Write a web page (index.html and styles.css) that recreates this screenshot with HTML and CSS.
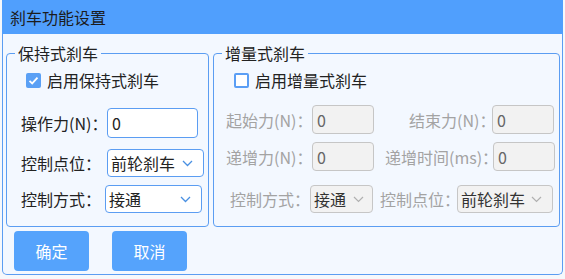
FILE: index.html
```html
<!DOCTYPE html>
<html lang="zh-CN">
<head>
  <meta charset="UTF-8">
  <title>刹车功能设置</title>
  <link rel="stylesheet" href="styles.css">
</head>
<body>
  <div class="window">
    <div class="titlebar">刹车功能设置</div>
    <div class="content">
      <div class="groups">
        <fieldset class="group group-hold">
          <legend>保持式刹车</legend>
          <div class="check-row">
            <span class="check checked">
              <svg width="15" height="15" viewBox="0 0 15 15"><path d="M3.5 7.8 L6.2 10.4 L11.5 4.6" fill="none" stroke="#fff" stroke-width="1.8"/></svg>
            </span>
            启用保持式刹车
          </div>
          <div class="row row-first">
            <label class="lbl lbl-hold">操作力(N)：</label>
            <input class="field" type="text" value="0">
          </div>
          <div class="row row-second">
            <label class="lbl lbl-hold">控制点位：</label>
            <div class="select">前轮刹车
              <svg class="arrow" width="11" height="7" viewBox="0 0 11 7"><path d="M1 1 L5.5 5.5 L10 1" fill="none" stroke="#4a90e2" stroke-width="1.3"/></svg>
            </div>
          </div>
          <div class="row row-third">
            <label class="lbl lbl-hold-mode">控制方式：</label>
            <div class="select">接通
              <svg class="arrow" width="11" height="7" viewBox="0 0 11 7"><path d="M1 1 L5.5 5.5 L10 1" fill="none" stroke="#4a90e2" stroke-width="1.3"/></svg>
            </div>
          </div>
        </fieldset>

        <fieldset class="group group-inc">
          <legend>增量式刹车</legend>
          <div class="check-row">
            <span class="check"></span>
            启用增量式刹车
          </div>
          <div class="row row-a">
            <label class="lbl off lbl-start">起始力(N)：</label>
            <input class="field small" type="text" value="0" disabled>
            <label class="lbl off lbl-end">结束力(N)：</label>
            <input class="field small" type="text" value="0" disabled>
          </div>
          <div class="row row-b">
            <label class="lbl off lbl-start">递增力(N)：</label>
            <input class="field small" type="text" value="0" disabled>
            <label class="lbl off lbl-time">递增时间(ms)：</label>
            <input class="field small" type="text" value="0" disabled>
          </div>
          <div class="row row-c">
            <label class="lbl off lbl-mode">控制方式：</label>
            <div class="select small off">接通
              <svg class="arrow" width="11" height="7" viewBox="0 0 11 7"><path d="M1 1 L5.5 5.5 L10 1" fill="none" stroke="#b0b0b0" stroke-width="1.2"/></svg>
            </div>
            <label class="lbl off lbl-point">控制点位：</label>
            <div class="select off">前轮刹车
              <svg class="arrow" width="11" height="7" viewBox="0 0 11 7"><path d="M1 1 L5.5 5.5 L10 1" fill="none" stroke="#b0b0b0" stroke-width="1.2"/></svg>
            </div>
          </div>
        </fieldset>
      </div>

      <div class="actions">
        <button class="btn">确定</button>
        <button class="btn">取消</button>
      </div>
    </div>
  </div>
</body>
</html>
```

FILE: styles.css
```css
body {
  margin: 0;
  background: #f6f8fb;
  font-family: "Noto Sans CJK SC", "Liberation Sans", sans-serif;
  font-size: 16px;
  color: #222;
}

.window {
  width: 561px;
  margin-left: 2px;
}

.titlebar {
  height: 34px;
  line-height: 34px;
  padding-left: 8px;
  background-color: #509ffd;
  color: #1c1c1c;
}

.content {
  background-color: #f3f8ff;
  border: 1px solid #5b9df2;
  border-top: none;
  border-radius: 0 0 5px 5px;
  padding: 10px 0 3px 3px;
}

.groups {
  display: flex;
  gap: 4px;
}

.group {
  margin: 0;
  box-sizing: border-box;
  border: 1px solid #5b9df2;
  border-radius: 4px;
  padding: 8px 0 13px 12px;
  min-width: 0;
}

.group-hold {
  width: 203px;
}

.group-inc {
  width: 347px;
}

legend {
  line-height: 18px;
  padding: 0 3px;
  margin-left: -4px;
  color: #222;
}

.check-row {
  display: flex;
  align-items: center;
  height: 21px;
  line-height: 21px;
  margin-left: 7px;
}

.group-inc .check-row {
  margin-left: 8px;
}

.check {
  width: 15px;
  height: 15px;
  box-sizing: border-box;
  border: 2px solid #5a9ef5;
  border-radius: 2px;
  background: #fff;
  margin-right: 6px;
  display: flex;
}

.check.checked {
  border: none;
  background: #5aa0f5;
}

.row {
  display: flex;
  align-items: center;
}

.group-hold .row {
  margin-left: 2px;
}

.row-first {
  margin-top: 17px;
}

.row-second {
  margin-top: 11px;
}

.row-third {
  margin-top: 8px;
}

.row-a {
  margin-top: 14px;
}

.row-b {
  margin-top: 8px;
}

.row-c {
  margin-top: 14px;
}

.lbl {
  flex: none;
  white-space: nowrap;
  color: #222;
}

.lbl.off {
  color: #a3a3a3;
}

.lbl-hold {
  width: 86px;
}

.lbl-hold-mode {
  width: 84px;
}

.lbl-start {
  width: 86px;
}

.lbl-end {
  width: 83px;
  margin-left: 35px;
}

.lbl-time {
  width: 108px;
  margin-left: 11px;
}

.lbl-mode {
  width: 80px;
  margin-left: 4px;
}

.lbl-point {
  width: 77px;
  margin-left: 7px;
}

.field {
  box-sizing: border-box;
  width: 91px;
  height: 30px;
  border: 1px solid #5b9df2;
  border-radius: 4px;
  padding: 0 4px;
  background: #fff;
  font-family: inherit;
  font-size: 16px;
  color: #222;
  outline: none;
}

.field.small {
  width: 62px;
  height: 29px;
}

.field:disabled {
  background: #f2f2f2;
  border-color: #c6c6c6;
  color: #666;
}

.select {
  box-sizing: border-box;
  width: 97px;
  height: 28px;
  line-height: 26px;
  border: 1px solid #5b9df2;
  border-radius: 4px;
  padding-left: 3px;
  background: #fff;
  display: flex;
  align-items: center;
  justify-content: space-between;
  padding-right: 10px;
}

.select.off {
  width: 96px;
  background: #f2f2f2;
  border-color: #c6c6c6;
  color: #333;
}

.select.small {
  width: 63px;
  padding-right: 8px;
}

.arrow {
  flex: none;
}

.actions {
  display: flex;
  gap: 23px;
  margin-top: 4px;
  padding-left: 8px;
}

.btn {
  width: 75px;
  height: 40px;
  border: none;
  border-radius: 4px;
  background-color: #55a3fc;
  color: #fff;
  font-family: inherit;
  font-size: 16px;
  cursor: pointer;
}
```
